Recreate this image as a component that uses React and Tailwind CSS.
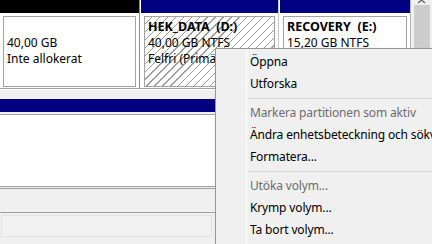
import React from 'react'

const font = { fontFamily: '"Noto Sans", "Open Sans", sans-serif' }

function Partition({ strip, title, lines, hatched }) {
  return (
    <div className="flex flex-col h-full">
      <div className={`h-[13px] ${strip}`} />
      <div className="flex-1 pt-[3px] px-[3px] pb-[1px]">
        <div
          className={`h-full border border-[#a3a3a3] px-[3px] pt-[2px] leading-[16px] text-[12px] text-black ${
            hatched
              ? 'bg-[repeating-linear-gradient(135deg,#ffffff_0px,#ffffff_4.6px,#9a9a9a_4.6px,#9a9a9a_5.6px)]'
              : 'bg-white'
          }`}
        >
          <div className="font-bold h-[16px] text-[12.5px] whitespace-pre overflow-hidden">{title}</div>
          {lines.map((l) => (
            <div key={l} className="whitespace-nowrap overflow-hidden">{l}</div>
          ))}
        </div>
      </div>
    </div>
  )
}

const items = [
  { label: 'Öppna' },
  { label: 'Utforska' },
  { sep: true },
  { label: 'Markera partitionen som aktiv', disabled: true },
  { label: 'Ändra enhetsbeteckning och sökvägar...' },
  { label: 'Formatera...' },
  { sep: true },
  { label: 'Utöka volym...', disabled: true },
  { label: 'Krymp volym...' },
  { label: 'Ta bort volym...' },
]

export default function App() {
  return (
    <div className="relative w-[432px] h-[244px] overflow-hidden bg-[#f0f0f0]" style={font}>
      {/* Disk row */}
      <div className="flex h-[89px] bg-white border-b border-[#a0a0a0]">
        <div className="w-[140px] border-r border-[#8c8c8c]">
          <Partition strip="bg-black" title="" lines={['40,00 GB', 'Inte allokerat']} />
        </div>
        <div className="w-[139px] border-r border-[#c8c8c8] pl-[1px]">
          <Partition strip="bg-[#000080]" title="HEK_DATA  (D:)" lines={['40,00 GB NTFS', 'Felfri (Primär partition)']} hatched />
        </div>
        <div className="w-[131px] pl-[1px]">
          <Partition strip="bg-[#000080]" title="RECOVERY  (E:)" lines={['15,20 GB NTFS', 'Felfri (OEM-partition)']} />
        </div>
        <div className="flex-1 border-l border-[#b4b4b4] bg-[#f0f0f0] flex flex-col items-center">
          <svg width="9" height="5" viewBox="0 0 9 5" className="mt-[-1px]">
            <path d="M1 4 L4.5 1 L8 4" stroke="#606060" strokeWidth="1.2" fill="none" />
          </svg>
          <div className="w-[16px] flex-1 bg-[#cdcdcd] mt-[1px]" />
        </div>
      </div>

      <div className="h-[10px] border-t border-white" />

      {/* Lower disk list */}
      <div className="h-[13px] bg-[#000080]" />
      <div className="h-[73px] mt-[2px] bg-white border-t border-b border-[#a0a0a0]" />
      <div className="h-[2px] border-b border-[#a0a0a0]" />
      <div className="h-[23px]" />
      <div className="border-t border-[#a0a0a0] pt-[2px] h-[30px]">
        <div className="h-[22px] mx-[1px] w-[211px] border border-[#e2e2e2] bg-[#f2f2f2]" />
      </div>

      {/* Context menu */}
      <div className="absolute left-[215px] top-[48px] w-[260px] h-[210px] bg-[#f0f0f0] border border-[#979797] py-[2px] text-[12px] tracking-[-0.15px] shadow-[2px_2px_3px_rgba(0,0,0,0.3)]">
        <div className="absolute left-[30px] top-0 bottom-0 w-px bg-[#e2e3e3] border-r border-white" />
        {items.map((it, i) =>
          it.sep ? (
            <div key={i} className="h-[7px] flex items-center pl-[32px]">
              <div className="h-px w-full bg-[#d7d7d7]" />
            </div>
          ) : (
            <div
              key={i}
              className={`h-[22px] flex items-center pl-[34px] whitespace-nowrap ${
                it.disabled ? 'text-[#6d6d6d]' : 'text-black'
              }`}
            >
              {it.label}
            </div>
          )
        )}
      </div>
    </div>
  )
}
